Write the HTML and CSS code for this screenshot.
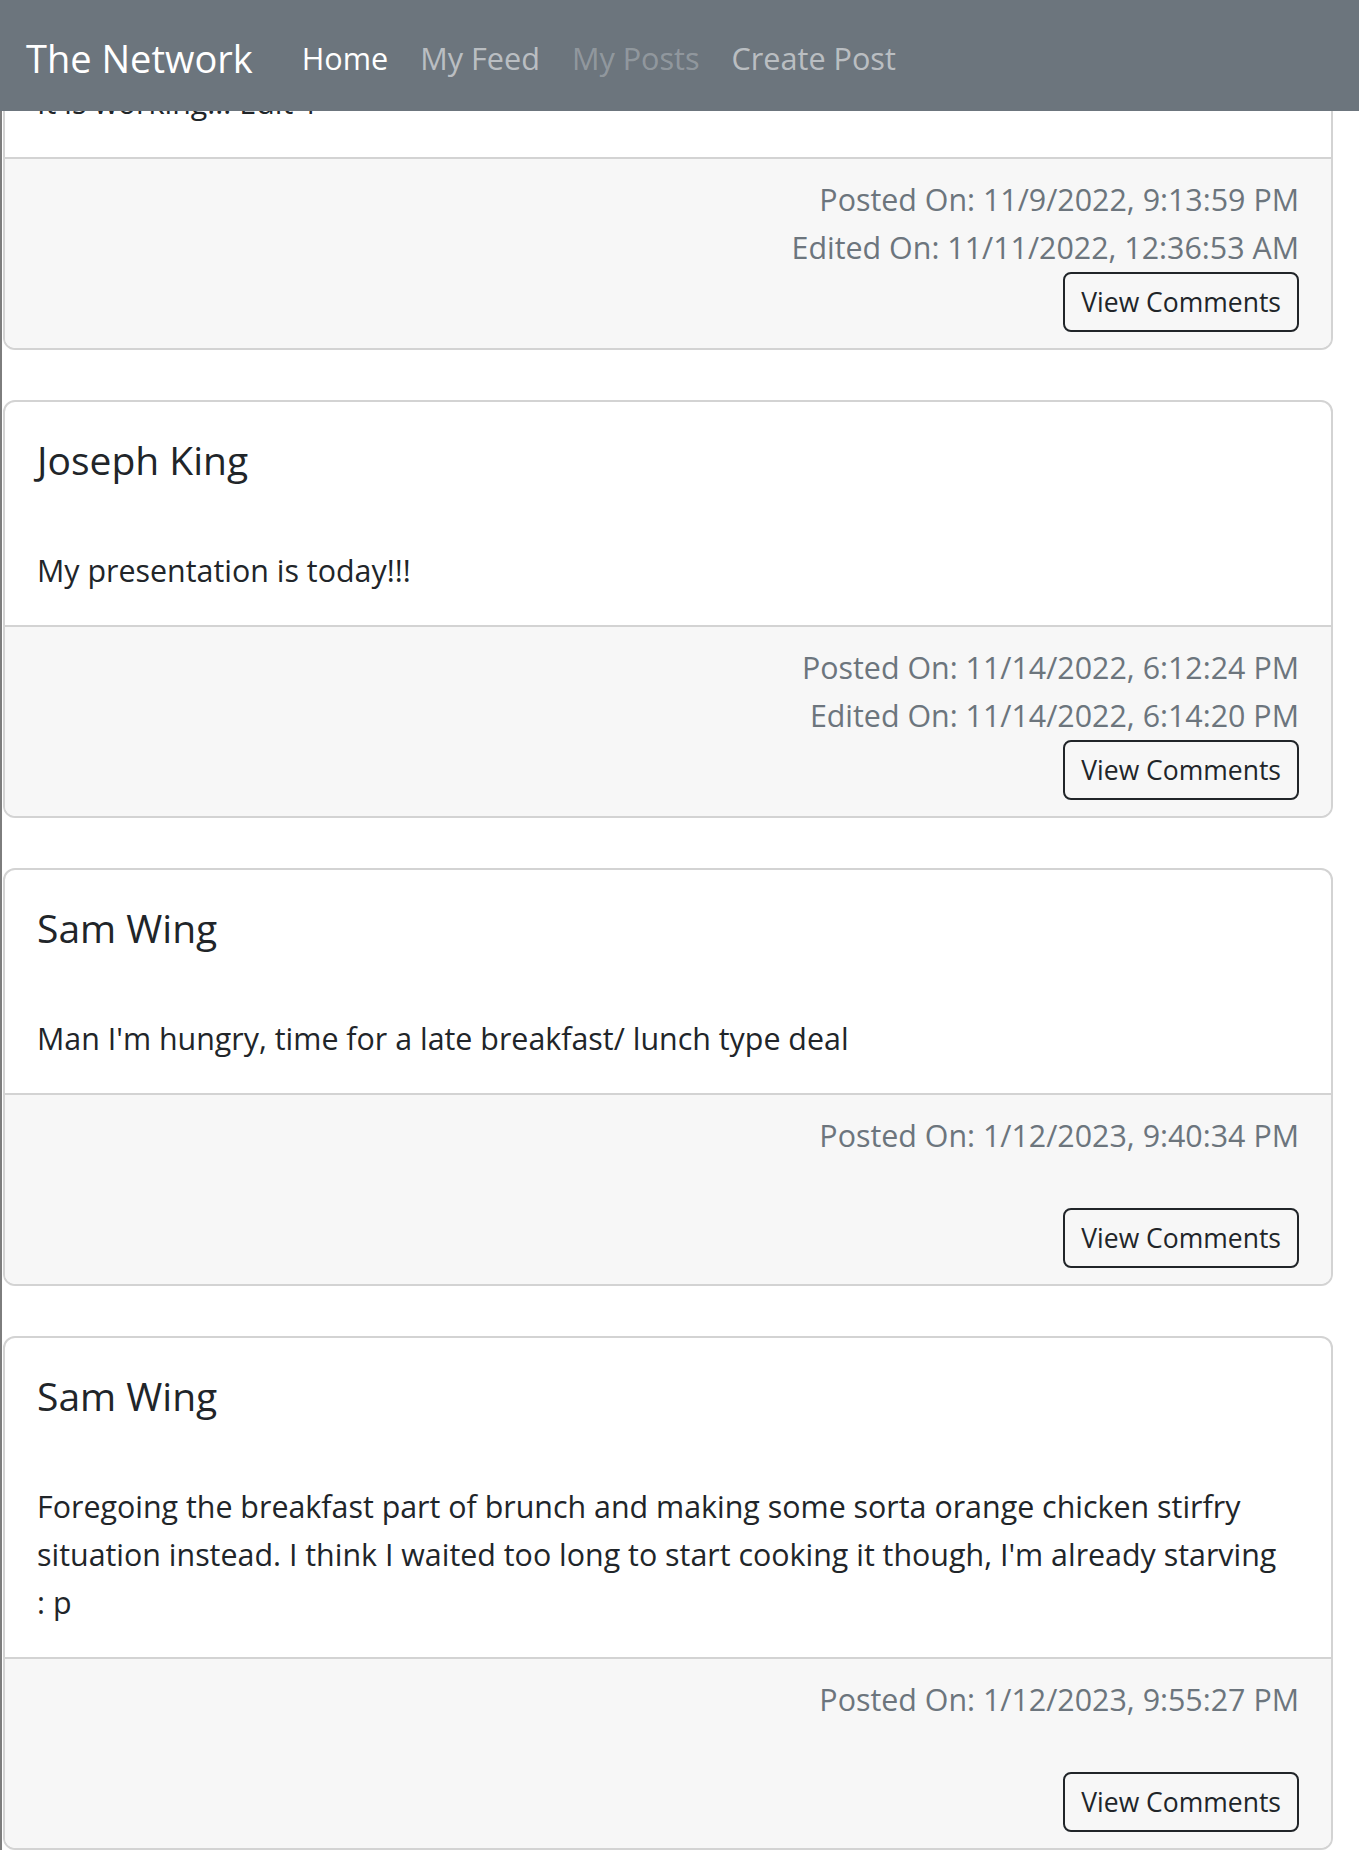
FILE: index.html
```html
<!DOCTYPE html>
<html lang="en">
<head>
<meta charset="utf-8">
<title>The Network</title>
<link rel="stylesheet" href="styles.css">
</head>
<body>
<nav class="navbar">
  <a class="brand" href="#">The Network</a>
  <ul class="nav-links">
    <li><a class="nav-link active" href="#">Home</a></li>
    <li><a class="nav-link" href="#">My Feed</a></li>
    <li><a class="nav-link disabled" href="#">My Posts</a></li>
    <li><a class="nav-link" href="#">Create Post</a></li>
  </ul>
</nav>
<main class="feed">
  <article class="card">
    <div class="card-body">
      <h5 class="card-title">&nbsp;</h5>
      <p class="card-text">It is working!!! Edit 1</p>
    </div>
    <div class="card-footer">
      <div class="meta">Posted On: 11/9/2022, 9:13:59 PM</div>
      <div class="meta">Edited On: 11/11/2022, 12:36:53 AM</div>
      <button class="btn">View Comments</button>
    </div>
  </article>
  <article class="card">
    <div class="card-body">
      <h5 class="card-title">Joseph King</h5>
      <p class="card-text">My presentation is today!!!</p>
    </div>
    <div class="card-footer">
      <div class="meta">Posted On: 11/14/2022, 6:12:24 PM</div>
      <div class="meta">Edited On: 11/14/2022, 6:14:20 PM</div>
      <button class="btn">View Comments</button>
    </div>
  </article>
  <article class="card">
    <div class="card-body">
      <h5 class="card-title">Sam Wing</h5>
      <p class="card-text">Man I'm hungry, time for a late breakfast/ lunch type deal</p>
    </div>
    <div class="card-footer">
      <div class="meta">Posted On: 1/12/2023, 9:40:34 PM</div>
      <div class="meta"></div>
      <button class="btn">View Comments</button>
    </div>
  </article>
  <article class="card">
    <div class="card-body">
      <h5 class="card-title">Sam Wing</h5>
      <p class="card-text card-text-long">Foregoing the breakfast part of brunch and making some sorta orange chicken stirfry<br>situation instead. I think I waited too long to start cooking it though, I'm already starving<br>: p</p>
    </div>
    <div class="card-footer">
      <div class="meta">Posted On: 1/12/2023, 9:55:27 PM</div>
      <div class="meta"></div>
      <button class="btn">View Comments</button>
    </div>
  </article>
</main>
</body>
</html>
```
FILE: styles.css
```css
html, body {
  margin: 0;
  padding: 0;
}

body {
  font-family: "Open Sans", "Noto Sans", sans-serif;
  color: #212529;
  background: #fff;
  border-left: 2px solid #7d7d7d;
}

.navbar {
  position: fixed;
  top: 0;
  left: 0;
  right: 0;
  height: 111px;
  box-sizing: border-box;
  background: #6c757d;
  display: flex;
  align-items: center;
  padding-left: 26px;
  z-index: 10;
}

.brand {
  font-size: 38px;
  line-height: 60px;
  padding-top: 4px;
  color: #fff;
  text-decoration: none;
  margin-right: 33px;
}

.nav-links {
  display: flex;
  list-style: none;
  margin: 0;
  padding: 4px 0 0;
}

.nav-link {
  display: block;
  padding: 0 16px;
  font-size: 30.6px;
  line-height: 48px;
  color: rgba(255, 255, 255, 0.55);
  text-decoration: none;
}

.nav-link.active {
  color: #fff;
}

.nav-link.disabled {
  color: rgba(255, 255, 255, 0.27);
}

.feed {
  margin-top: -68px;
  padding: 0 26px 0 1px;
  display: flex;
  flex-direction: column;
  gap: 50px;
}

.card {
  border: 2px solid #d3d3d3;
  border-radius: 12px;
  overflow: hidden;
  background: #fff;
}

.card-body {
  padding: 34px 32px 30px;
}

.card-title {
  margin: 0 0 64px;
  font-size: 39px;
  line-height: 47px;
  font-weight: 400;
}

.card-text {
  margin: 0;
  font-size: 30.4px;
  line-height: 48px;
}

.card-text-long {
  white-space: nowrap;
}

.card-footer {
  background: #f7f7f7;
  border-top: 2px solid #d3d3d3;
  padding: 17px 32px 16px;
  display: flex;
  flex-direction: column;
  align-items: flex-end;
}

.meta {
  font-size: 30.4px;
  line-height: 48px;
  height: 48px;
  color: #6c757d;
}

.btn {
  font-family: inherit;
  font-size: 26.5px;
  line-height: 40px;
  padding: 8px 16px;
  border: 2px solid #212529;
  border-radius: 8px;
  background: transparent;
  color: #212529;
  cursor: pointer;
}
```
